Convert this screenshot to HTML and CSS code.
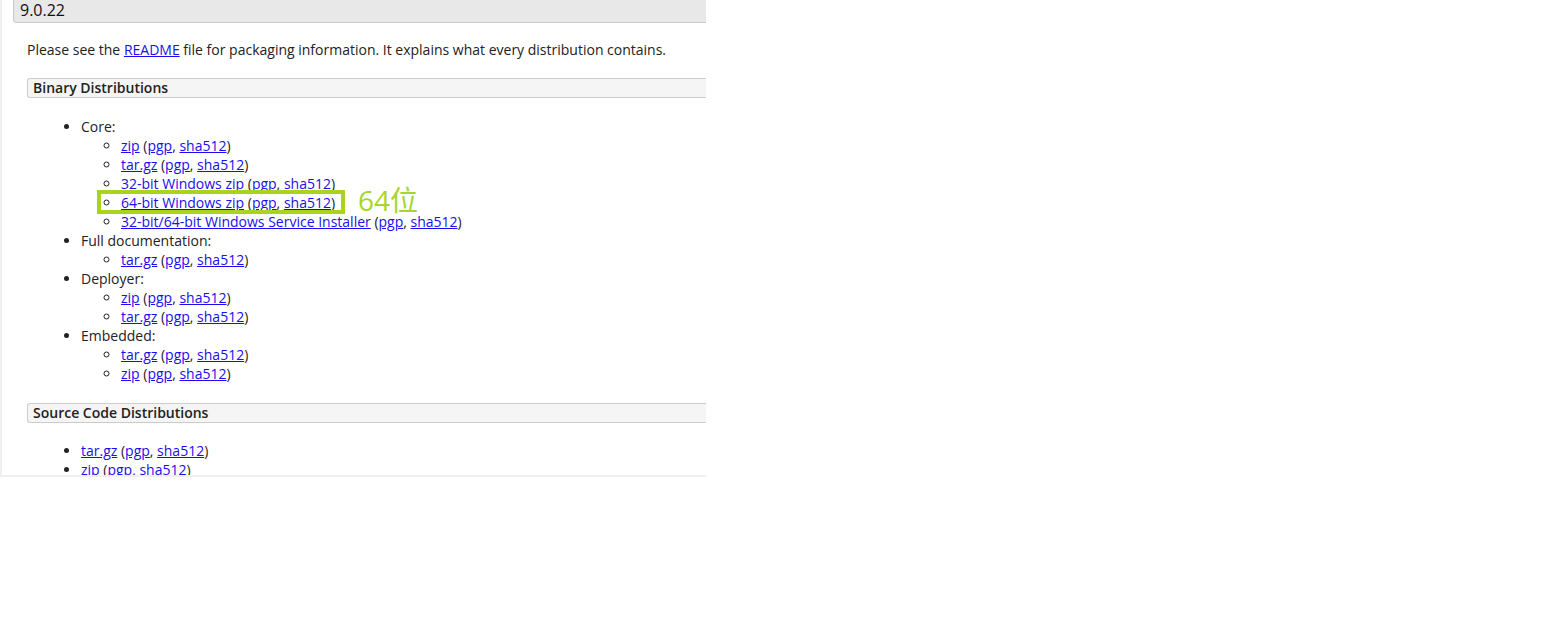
FILE: index.html
```html
<!DOCTYPE html>
<html>
<head>
<meta charset="utf-8">
<link rel="stylesheet" href="styles.css">
</head>
<body>
<div class="page">
  <div class="content">
    <h3 class="version">9.0.22</h3>
    <div class="section">
      <p class="intro">Please see the <a href="#">README</a> file for packaging information. It explains what every distribution contains.</p>
      <h4 class="box">Binary Distributions</h4>
      <ul class="list">
        <li>Core:
          <ul class="sub">
            <li><a href="#">zip</a> (<a href="#">pgp</a>, <a href="#">sha512</a>)</li>
            <li><a href="#">tar.gz</a> (<a href="#">pgp</a>, <a href="#">sha512</a>)</li>
            <li><a href="#">32-bit Windows zip</a> (<a href="#">pgp</a>, <a href="#">sha512</a>)</li>
            <li class="marked"><a href="#">64-bit Windows zip</a> (<a href="#">pgp</a>, <a href="#">sha512</a>)<span class="frame"></span><span class="note">64位</span></li>
            <li><a href="#">32-bit/64-bit Windows Service Installer</a> (<a href="#">pgp</a>, <a href="#">sha512</a>)</li>
          </ul>
        </li>
        <li>Full documentation:
          <ul class="sub">
            <li><a href="#">tar.gz</a> (<a href="#">pgp</a>, <a href="#">sha512</a>)</li>
          </ul>
        </li>
        <li>Deployer:
          <ul class="sub">
            <li><a href="#">zip</a> (<a href="#">pgp</a>, <a href="#">sha512</a>)</li>
            <li><a href="#">tar.gz</a> (<a href="#">pgp</a>, <a href="#">sha512</a>)</li>
          </ul>
        </li>
        <li>Embedded:
          <ul class="sub">
            <li><a href="#">tar.gz</a> (<a href="#">pgp</a>, <a href="#">sha512</a>)</li>
            <li><a href="#">zip</a> (<a href="#">pgp</a>, <a href="#">sha512</a>)</li>
          </ul>
        </li>
      </ul>
      <h4 class="box">Source Code Distributions</h4>
      <ul class="list last">
        <li><a href="#">tar.gz</a> (<a href="#">pgp</a>, <a href="#">sha512</a>)</li>
        <li><a href="#">zip</a> (<a href="#">pgp</a>, <a href="#">sha512</a>)</li>
      </ul>
    </div>
  </div>
</div>
</body>
</html>
```
FILE: styles.css
```css
html, body {
  margin: 0;
  padding: 0;
  background: #fff;
}
body {
  font-family: "Open Sans", "Noto Sans CJK SC", sans-serif;
  font-size: 14px;
  color: #222;
}
a {
  color: #1a0dee;
  text-decoration: underline;
}
.page {
  width: 704px;
  height: 475px;
  border-left: 2px solid #efefef;
  border-bottom: 2px solid #f0f0f0;
  overflow: hidden;
}
.content {
  padding-left: 11px;
  width: 760px;
}
.version {
  margin: -3px 0 0 0;
  height: 23px;
  line-height: 23px;
  padding: 2px 0 0 6px;
  font-size: 16px;
  font-weight: normal;
  color: #111;
  background: #e8e8e8;
  border-left: 1px solid #c8c8c8;
  border-bottom: 1px solid #c8c8c8;
  border-radius: 0 0 0 4px;
}
.section {
  padding-left: 14px;
}
.intro {
  margin: 17px 0 0 0;
  line-height: 19px;
}
.box {
  margin: 19px 0 0 0;
  height: 18px;
  line-height: 18px;
  padding-left: 5px;
  font-size: 14px;
  font-weight: 600;
  background: #f5f5f5;
  border: 1px solid #ccc;
  border-right: none;
  border-radius: 3px 0 0 3px;
}
.list {
  margin: 19px 0 20px 0;
  padding-left: 54px;
  line-height: 19px;
  list-style: disc;
}
.list.last {
  margin-top: 18px;
}
.sub {
  margin: 0;
  padding-left: 40px;
  list-style: circle;
}
.marked {
  position: relative;
}
.frame {
  position: absolute;
  left: -24px;
  top: -3px;
  width: 240px;
  height: 16px;
  border: 4px solid #a9d31d;
}
.note {
  position: absolute;
  left: 237px;
  top: -11px;
  font-size: 28px;
  line-height: 36px;
  color: #a6d62a;
  white-space: nowrap;
}
```
